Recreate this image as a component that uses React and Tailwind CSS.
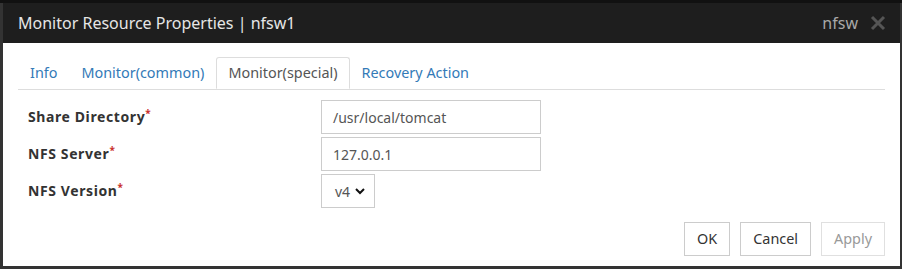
import React from "react";

const font = { fontFamily: '"Noto Sans", "Noto Sans CJK JP", sans-serif' };

function Tab({ label, active }) {
  if (active) {
    return (
      <div className="px-[11px] h-[32px] -mb-px flex items-center border border-[#ddd] border-b-white rounded-t-[3px] bg-white text-[#555]">
        {label}
      </div>
    );
  }
  return (
    <div className="px-[11px] h-[32px] flex items-center border border-transparent text-[#337ab7]">
      {label}
    </div>
  );
}

function Field({ label, children }) {
  return (
    <div className="flex items-center">
      <div className="w-[293px] font-bold text-[#333] tracking-[0.6px] -mt-[2px]">
        {label}
        <span className="text-[#c9302c] text-[10px] align-top">*</span>
      </div>
      {children}
    </div>
  );
}

export default function App() {
  return (
    <div className="w-[902px] h-[269px] bg-[#333] flex flex-col overflow-hidden" style={font}>
      <div className="h-[3px] bg-[#111]" />
      <div className="flex-1 flex pl-[3px] pr-[2px] pb-[3px]">
        <div className="flex-1 flex flex-col bg-white">
          <div className="h-[40px] bg-[#1e1e1e] flex items-center justify-between pl-[15px] pr-[14px]">
            <div className="text-[16px] text-[#e6e6e6]">Monitor Resource Properties | nfsw1</div>
            <div className="flex items-center gap-[12px]">
              <span className="text-[16px] text-[#a8a8a8]">nfsw</span>
              <svg width="16" height="16" viewBox="0 0 16 16">
                <path d="M2 2 L14 14 M14 2 L2 14" stroke="#555" strokeWidth="3" />
              </svg>
            </div>
          </div>
          <div className="px-[15px] pt-[14px]">
            <div className="flex border-b border-[#ddd] text-[14.4px]">
              <Tab label="Info" />
              <Tab label="Monitor(common)" />
              <Tab label="Monitor(special)" active />
              <Tab label="Recovery Action" />
            </div>
            <div className="pl-[10px] pt-[10px] flex flex-col gap-[3px] text-[14px]">
              <Field label="Share Directory">
                <div className="w-[220px] h-[34px] border border-[#ccc] flex items-center px-[11px] text-[#555]">
                  /usr/local/tomcat
                </div>
              </Field>
              <Field label="NFS Server">
                <div className="w-[220px] h-[34px] border border-[#ccc] flex items-center px-[11px] text-[#555]">
                  127.0.0.1
                </div>
              </Field>
              <Field label="NFS Version">
                <div className="w-[54px] h-[34px] border border-[#ccc] flex items-center pl-[13px] gap-[5px] text-[#555]">
                  v4
                  <svg width="10" height="8" viewBox="0 0 10 8">
                    <path d="M1 2 L5 6 L9 2" stroke="#111" strokeWidth="2" fill="none" />
                  </svg>
                </div>
              </Field>
            </div>
            <div className="flex justify-end gap-[10px] mt-[14px] text-[14.4px]">
              <div className="h-[34px] border border-[#ccc] px-[12px] flex items-center text-[#333]">OK</div>
              <div className="h-[34px] border border-[#ccc] px-[12px] flex items-center text-[#333]">Cancel</div>
              <div className="h-[34px] border border-[#e0e0e0] px-[12px] flex items-center text-[#999]">Apply</div>
            </div>
          </div>
        </div>
      </div>
    </div>
  );
}
